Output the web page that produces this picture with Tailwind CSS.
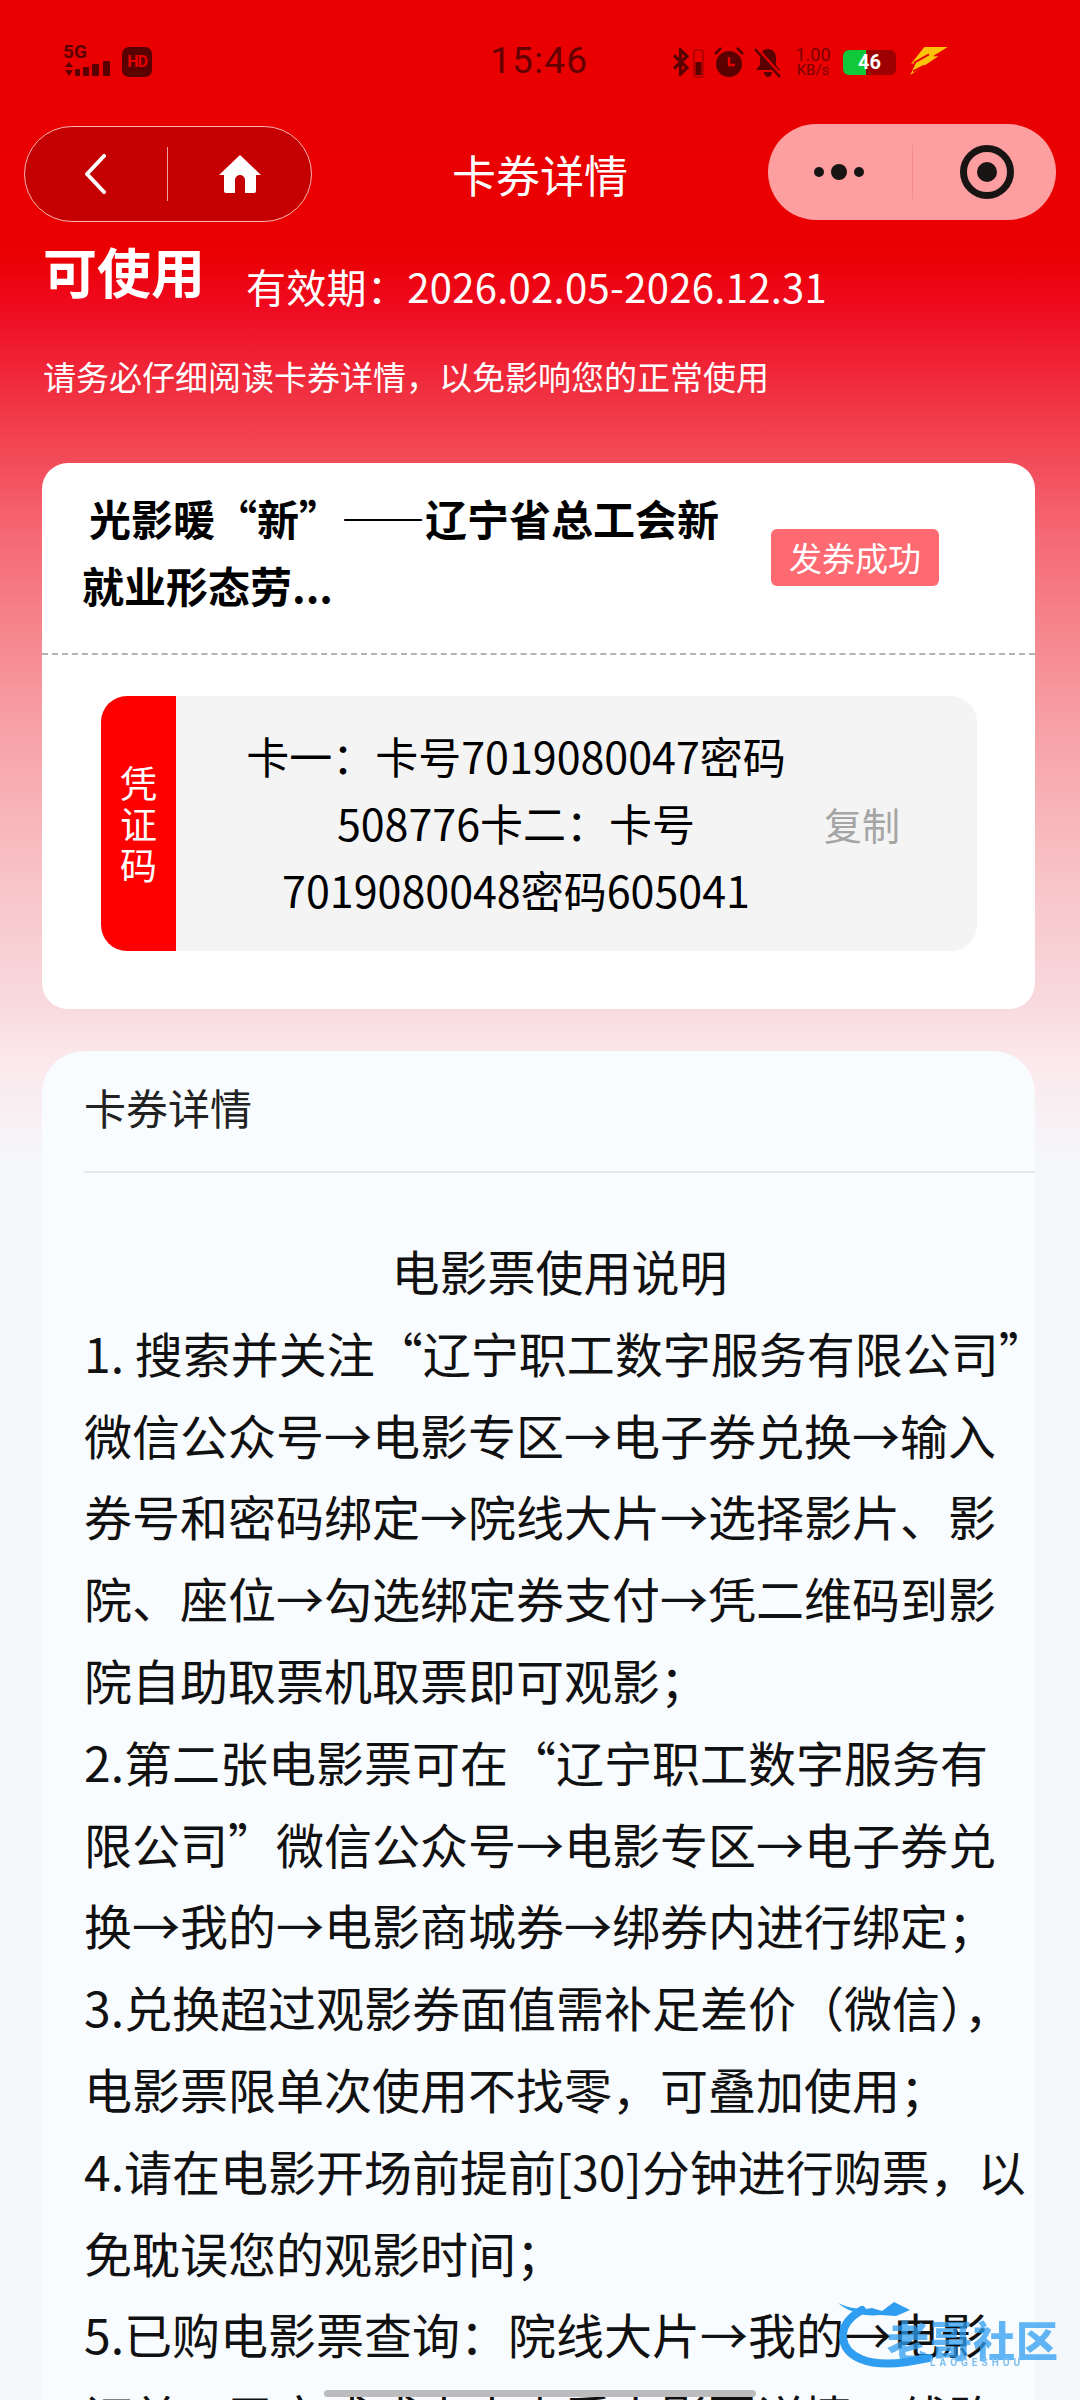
<!DOCTYPE html>
<html lang="zh-CN">
<head>
  <meta charset="UTF-8" />
  <meta name="viewport" content="width=device-width, initial-scale=1.0" />
  <title>卡券详情</title>
  <script src="https://cdn.jsdelivr.net/npm/@tailwindcss/browser@4"></script>
</head>
<body class="font-['Noto_Sans_CJK_SC',sans-serif] text-black">
  <div class="relative w-[1080px] h-[2400px] overflow-hidden bg-[linear-gradient(180deg,#e80000_0px,#ea0000_250px,#ef0a20_307px,#f03040_393px,#f56a75_537px,#f79ca2_709px,#f8c4c8_881px,#f8d9dd_1000px,#fbe8ec_1060px,#f9eef2_1100px,#f4f8fa_1170px)]">

    <!-- status bar -->
    <div class="relative h-[120px]">
      <div class="absolute left-[62px] top-[45px] flex items-start gap-[12px]">
        <div class="w-[48px] h-[32px] relative">
          <span class="absolute left-[1px] -top-[2px] text-[19px] leading-[18px] font-bold text-[#5a0000] font-['Roboto',sans-serif]">5G</span>
          <svg class="absolute left-0 top-[15px]" width="50" height="18" viewBox="0 0 50 18" fill="#5a0000"><path d="M3 7 7 2l4 5zM3 10h8l-4 6z"/><rect x="13" y="9" width="5" height="7" rx="1"/><rect x="21" y="7" width="6" height="9" rx="1"/><rect x="30" y="4" width="7" height="12" rx="1"/><rect x="41" y="1" width="7" height="15" rx="1"/></svg>
        </div>
        <span class="mt-[2px] w-[30px] h-[30px] rounded-[7px] bg-[#5a0000] text-[#e80000] text-[16px] leading-[30px] text-center font-bold font-['Roboto',sans-serif] tracking-[-1px]">HD</span>
      </div>
      <span class="absolute left-[490px] top-[40px] text-[37px] leading-[42px] text-[#650000] font-['Roboto',sans-serif] tracking-[1.2px]">15:46</span>
      <div class="absolute left-[672px] top-[46px] flex items-center h-[32px]">
        <svg width="17" height="28" viewBox="0 0 18 30" fill="none" stroke="#5a0000" stroke-width="3.4"><path d="M2 8 16 21 9 28V2l7 7L2 22"/></svg>
        <svg class="ml-[4px]" width="11" height="31" viewBox="0 0 11 31"><rect x="1" y="3" width="9" height="27" rx="2" fill="none" stroke="#a80000" stroke-width="1.5"/><rect x="2.5" y="15" width="6" height="13" fill="#5a0000"/></svg>
        <svg class="ml-[9px]" width="32" height="32" viewBox="0 0 32 32"><circle cx="16" cy="18" r="13" fill="#5a0000"/><path d="M16 11v8h6" stroke="#e80000" stroke-width="2.5" fill="none"/><path d="M2 8 8 2M30 8l-6-6" stroke="#5a0000" stroke-width="2.5"/></svg>
        <svg class="ml-[9px]" width="28" height="32" viewBox="0 0 28 32"><path d="M14 3c5 0 8 4 8 9v7l4 5H2l4-5v-7c0-5 3-9 8-9zM10 26h8c0 3-2 5-4 5s-4-2-4-5z" fill="#5a0000"/><path d="M2 2 27 30" stroke="#e80000" stroke-width="4"/><path d="M1 3 26 31" stroke="#5a0000" stroke-width="2.5"/></svg>
        <div class="ml-[12px] w-[38px] flex flex-col items-center text-[#7a0000] font-['Roboto',sans-serif]">
          <span class="text-[18px] leading-[17px]">1.00</span>
          <span class="text-[15px] leading-[15px]">KB/s</span>
        </div>
        <div class="relative ml-[11px] w-[53px] h-[25px] rounded-[6px] overflow-hidden bg-[#9c0000]">
          <div class="w-[23px] h-full bg-[#10c838]"></div>
          <span class="absolute inset-0 text-center text-[20px] leading-[25px] font-bold text-white font-['Roboto',sans-serif]">46</span>
        </div>
        <svg class="ml-[12px] -mt-[2px]" width="42" height="30" viewBox="0 0 42 32" fill="#fcc30c"><path d="M16 1H41L25 11h6L1 31 7 18 2 19z"/><path d="M5 18 21 9" stroke="#e80000" stroke-width="2"/><path d="M4 27 16 21" stroke="#e80000" stroke-width="2"/></svg>
      </div>
    </div>

    <!-- nav -->
    <div class="relative h-[122px]">
      <div class="absolute left-[24px] top-[6px] w-[288px] h-[96px] rounded-[48px] border-[1.5px] border-[#f9b4b4] bg-[#c40000] flex items-center">
        <svg class="ml-[58px]" width="26" height="40" viewBox="0 0 26 40" fill="none" stroke="#fff" stroke-width="4" stroke-linecap="round" stroke-linejoin="round"><path d="M21 2 4 20l17 18"/></svg>
        <div class="ml-[58px] w-[1px] h-[54px] bg-[#f2a0a0]"></div>
        <svg class="ml-[50px]" width="44" height="40" viewBox="0 0 44 40" fill="#fff"><path d="M22 1 43 21h-5v16a2 2 0 0 1-2 2h-9V26a5 5 0 0 0-10 0v13H8a2 2 0 0 1-2-2V21H1z"/></svg>
      </div>
      <h1 class="absolute left-0 right-0 top-[26px] text-center text-[44px] leading-[56px] font-normal text-white">卡券详情</h1>
      <div class="absolute left-[768px] top-[4px] w-[288px] h-[96px] rounded-[48px] bg-[#fd9ea1] flex items-center">
        <div class="ml-[46px] flex items-center gap-[7px]">
          <span class="w-[10px] h-[10px] rounded-full bg-[#181414]"></span>
          <span class="w-[16px] h-[16px] rounded-full bg-[#181414]"></span>
          <span class="w-[10px] h-[10px] rounded-full bg-[#181414]"></span>
        </div>
        <div class="ml-[48px] w-[1px] h-[54px] bg-[#f58a8e]"></div>
        <div class="ml-[47px] w-[54px] h-[54px] rounded-full border-[7px] border-[#181414] flex items-center justify-center">
          <span class="w-[20px] h-[20px] rounded-full bg-[#181414]"></span>
        </div>
      </div>
    </div>

    <!-- state -->
    <div class="pl-[43px] h-[221px] text-white">
      <div class="flex items-start h-[120px]">
        <span class="text-[54px] leading-[70px] font-bold -mt-[6px]">可使用</span>
        <span class="ml-[41px] mt-[13px] text-[40px] leading-[62px] tracking-[0.3px]">有效期：2026.02.05-2026.12.31</span>
      </div>
      <p class="-mt-[8px] text-[33px] leading-[44px]">请务必仔细阅读卡券详情，以免影响您的正常使用</p>
    </div>

    <!-- voucher card -->
    <section class="ml-[42px] w-[993px] h-[546px] rounded-[26px] bg-white">
      <div class="relative h-[192px] border-b-[2px] border-dashed border-[#b4b4b4]">
        <p class="absolute left-[40px] top-[21px] w-[660px] text-[42px] leading-[67px] font-bold"><span class="pl-[7px]">光影暖“新”——辽宁省总工会新</span><br />就业形态劳...</p>
        <span class="absolute left-[729px] top-[66px] w-[168px] h-[57px] rounded-[6px] bg-[#fe6a72] text-white text-[33px] leading-[57px] text-center">发券成功</span>
      </div>
      <div class="ml-[59px] mt-[41px] w-[876px] h-[255px] rounded-[26px] bg-[#f4f4f4] flex overflow-hidden">
        <div class="w-[75px] bg-[#fe0000] text-white text-[37px] leading-[41px] flex flex-col items-center justify-center">
          <span>凭</span><span>证</span><span>码</span>
        </div>
        <p class="w-[680px] pt-[26px] text-center text-[43px] leading-[67px] whitespace-nowrap">卡一：卡号7019080047密码<br />508776卡二：卡号<br />7019080048密码605041</p>
        <span class="self-center ml-[-32px] text-[38px] text-[#a5a5a5]">复制</span>
      </div>
    </section>

    <!-- details card -->
    <section class="mt-[42px] ml-[42px] w-[993px] h-[1400px] rounded-t-[42px] bg-[#f9fcff] pl-[42px]">
      <div class="h-[122px] border-b-[2px] border-[#e6e9eb] text-[42px] leading-[112px] text-[#222]">卡券详情</div>
      <div class="mt-[57px] w-[951px] whitespace-nowrap text-[48px] leading-[81.8px] text-[#111]">
        <p class="text-center">电影票使用说明</p>
        <p>1. 搜索并关注“辽宁职工数字服务有限公司”</p>
        <p>微信公众号→电影专区→电子券兑换→输入</p>
        <p>券号和密码绑定→院线大片→选择影片、影</p>
        <p>院、座位→勾选绑定券支付→凭二维码到影</p>
        <p>院自助取票机取票即可观影；</p>
        <p>2.第二张电影票可在“辽宁职工数字服务有</p>
        <p>限公司”微信公众号→电影专区→电子券兑</p>
        <p>换→我的→电影商城券→绑券内进行绑定；</p>
        <p>3.兑换超过观影券面值需补足差价（微信），</p>
        <p>电影票限单次使用不找零，可叠加使用；</p>
        <p>4.请在电影开场前提前[30]分钟进行购票，以</p>
        <p>免耽误您的观影时间；</p>
        <p>5.已购电影票查询：院线大片→我的→电影</p>
        <p>订单→已完成或未来查看电影票详情→线路</p>
      </div>
    </section>

    <!-- watermark, home bar -->
    <div class="absolute left-[838px] top-[2300px] w-[226px] h-[80px] blur-[0.6px]">
      <svg class="absolute left-0 top-0" width="110" height="72" viewBox="0 0 110 72" fill="none"><path d="M24 10C10 18 4 28 5 38c2 18 24 30 64 24l22-4" stroke="#2f9df0" stroke-width="8" stroke-linecap="round"/><path d="M0 3c12 6 24 7 34 5l10 3 12-9 16 8-14 6-16-1c-14 2-30-2-42-12z" fill="#2f9df0"/></svg>
      <span class="absolute left-[49px] top-[13px] text-[42px] leading-[52px] tracking-[1px] font-black text-[#2f9df0]/75 whitespace-nowrap">老哥社区</span>
      <span class="absolute left-[92px] top-[57px] text-[10px] leading-[12px] tracking-[4px] font-bold text-[#7fc0f2] font-['Roboto',sans-serif]">LAOGESHOU</span>
    </div>
    <div class="absolute left-[324px] top-[2390px] w-[432px] h-[7px] rounded-full bg-[#bcbcbe]"></div>
  </div>
</body>
</html>
